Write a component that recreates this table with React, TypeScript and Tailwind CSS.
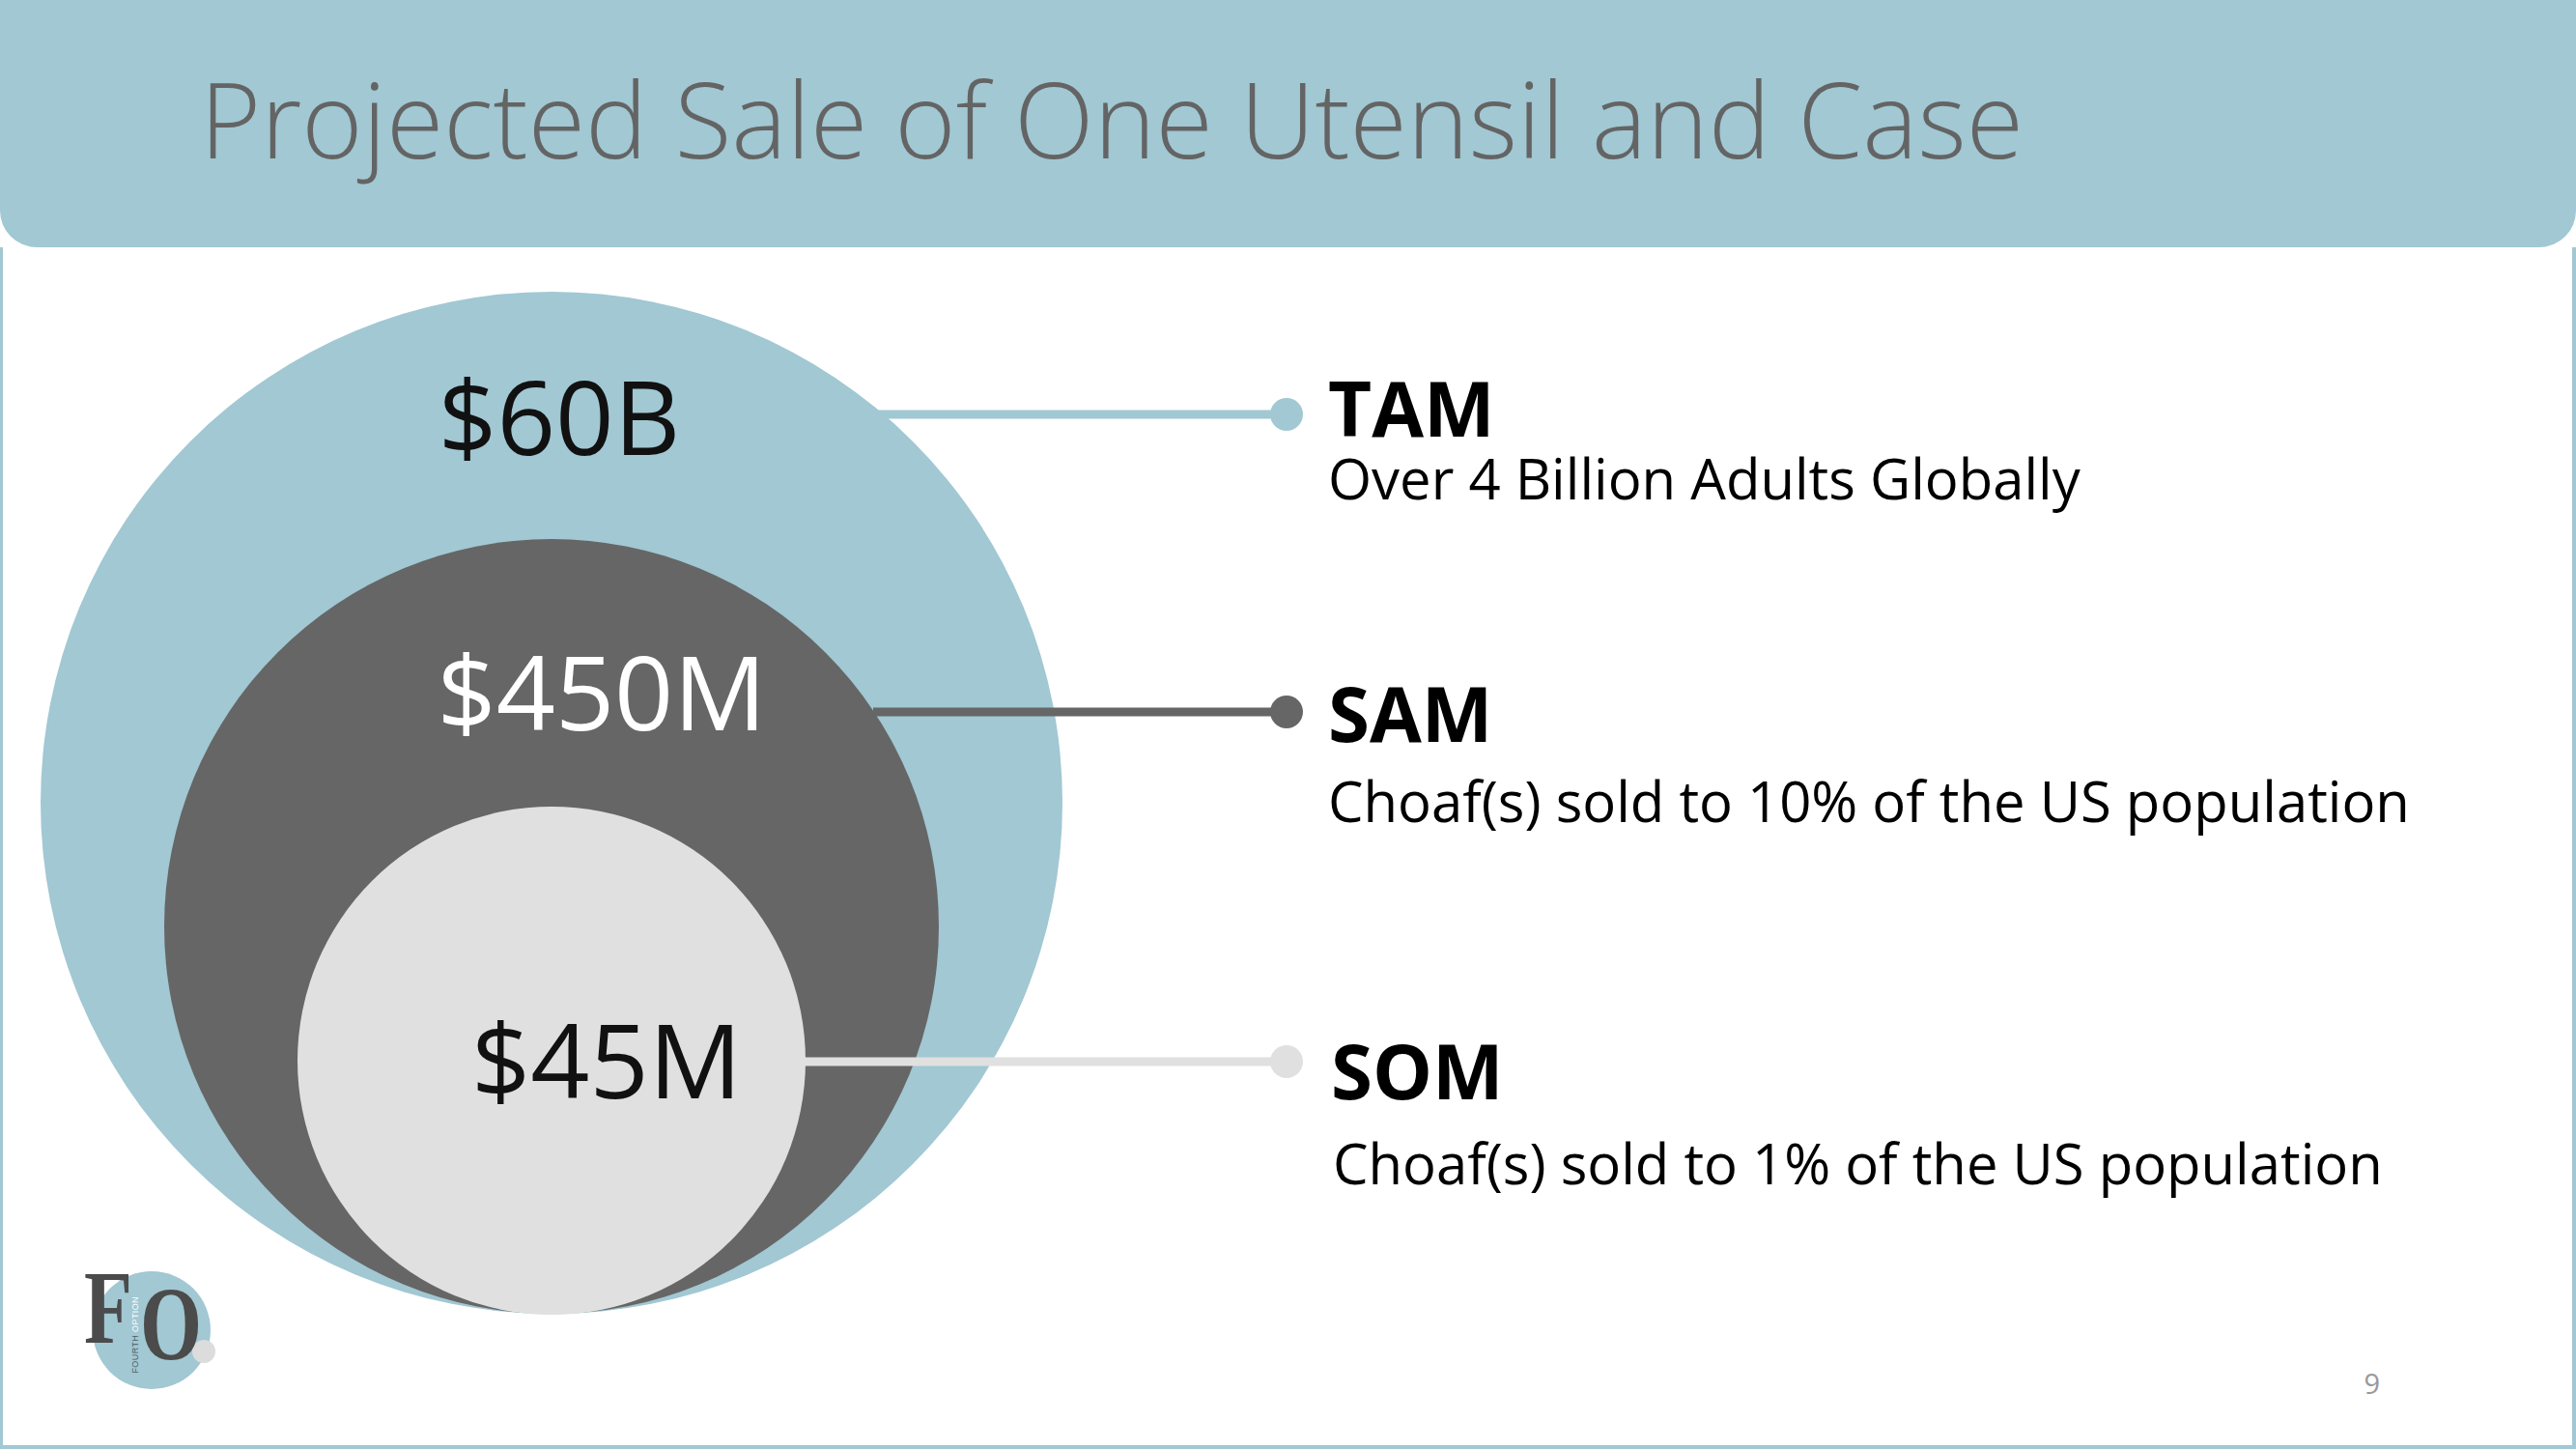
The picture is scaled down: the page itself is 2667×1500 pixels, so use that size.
const SANS = "font-['Open_Sans',sans-serif]";

const BLUE = "#a1c8d3";
const DARK = "#666666";
const LIGHT = "#e0e0e0";

function MarketCircles() {
  return (
    <svg
      width={1360}
      height={1240}
      viewBox="3 256 1360 1240"
      className="shrink-0"
    >
      <circle cx={571} cy={831} r={529} fill={BLUE} />
      <circle cx={571} cy={959} r={401} fill={DARK} />
      <circle cx={571} cy={1098} r={263} fill={LIGHT} />

      <line x1={906} y1={429} x2={1332} y2={429} stroke={BLUE} strokeWidth={9} />
      <circle cx={1332} cy={429} r={17} fill={BLUE} />
      <line x1={904} y1={737} x2={1332} y2={737} stroke={DARK} strokeWidth={9} />
      <circle cx={1332} cy={737} r={17} fill={DARK} />
      <line x1={832} y1={1099} x2={1332} y2={1099} stroke={LIGHT} strokeWidth={9} />
      <circle cx={1332} cy={1099} r={17} fill={LIGHT} />

      <text x={579} y={471} textAnchor="middle" fontSize={106} fill="#111111" className={SANS}>
        $60B
      </text>
      <text x={623} y={756} textAnchor="middle" fontSize={107} fill="#ffffff" className={SANS}>
        $450M
      </text>
      <text x={628} y={1137} textAnchor="middle" fontSize={107} fill="#111111" className={SANS}>
        $45M
      </text>
    </svg>
  );
}

function Logo() {
  return (
    <div className="absolute left-[80px] top-[1300px] h-[150px] w-[160px]">
      <svg width={160} height={150} viewBox="80 1300 160 150" className="absolute inset-0">
        <circle cx={157} cy={1377} r={61} fill={BLUE} />
        <circle cx={211} cy={1399} r={12} fill="#dcdcdc" />
      </svg>
      <span className="absolute left-[7px] top-[-1px] origin-left scale-x-[0.75] font-['Liberation_Serif',serif] text-[109px] font-bold leading-none text-[#4b4b4b]">
        F
      </span>
      <span className="absolute left-[65px] top-[18px] origin-left scale-x-[0.77] font-['Liberation_Serif',serif] text-[107px] font-bold leading-none text-[#4b4b4b]">
        O
      </span>
      <span className="absolute left-[56px] top-[42px] rotate-180 whitespace-nowrap font-['Liberation_Sans',sans-serif] text-[9px] leading-none tracking-[0.4px] [writing-mode:vertical-rl]">
        <span className="text-[#4f5d66]">FOURTH </span>
        <span className="text-white">OPTION</span>
      </span>
    </div>
  );
}

export default function App() {
  return (
    <div className="relative flex h-[1500px] w-[2667px] flex-col overflow-hidden bg-white">
      <header className="h-[256px] shrink-0 rounded-b-[38px] bg-[#a1c8d3] pl-[207px] pt-[69px]">
        <h1 className={`${SANS} text-[108px] font-light leading-none text-[#646464]`}>
          Projected Sale of One Utensil and Case
        </h1>
      </header>

      <main className="flex flex-1 border-b-4 border-l-[3px] border-r-4 border-[#a1c8d3]">
        <MarketCircles />
        <div className={`${SANS} flex flex-col pl-[12px] pt-[127px] text-black`}>
          <h2 className="text-[78px] font-bold leading-none">TAM</h2>
          <p className="mt-[5px] text-[58px] leading-none">
            Over 4 Billion Adults Globally
          </p>
          <h2 className="mt-[175px] text-[78px] font-bold leading-none">SAM</h2>
          <p className="mt-[23px] text-[58px] leading-none">
            Choaf(s) sold to 10% of the US population
          </p>
          <h2 className="mt-[211px] pl-[3px] text-[78px] font-bold leading-none">
            SOM
          </h2>
          <p className="mt-[28px] pl-[5px] text-[58px] leading-none">
            Choaf(s) sold to 1% of the US population
          </p>
        </div>
      </main>

      <Logo />
      <span
        className={`${SANS} absolute right-[203px] top-[1417px] text-[29px] leading-none text-[#999999]`}
      >
        9
      </span>
    </div>
  );
}
